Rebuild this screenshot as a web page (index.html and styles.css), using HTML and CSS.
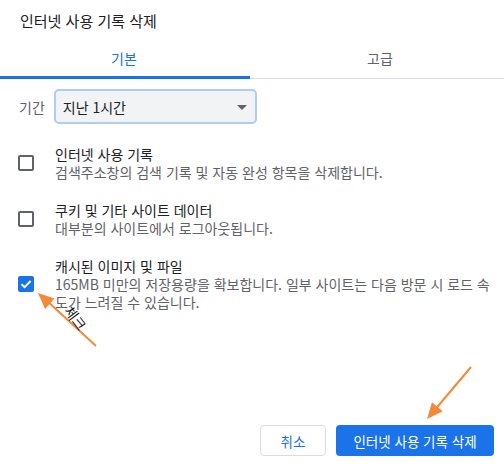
FILE: index.html
```html
<!DOCTYPE html>
<html lang="ko">
<head>
<meta charset="utf-8">
<link rel="stylesheet" href="styles.css">
</head>
<body>
<div class="dialog">
  <div class="title">인터넷 사용 기록 삭제</div>
  <div class="tabs">
    <div class="tab active">기본</div>
    <div class="tab">고급</div>
  </div>
  <div class="period">
    <span class="period-label">기간</span>
    <div class="select">
      <span>지난 1시간</span>
      <span class="caret"></span>
    </div>
  </div>
  <div class="items">
    <div class="item">
      <span class="box"></span>
      <div class="item-text">
        <div class="item-title">인터넷 사용 기록</div>
        <div class="item-desc">검색주소창의 검색 기록 및 자동 완성 항목을 삭제합니다.</div>
      </div>
    </div>
    <div class="item">
      <span class="box"></span>
      <div class="item-text">
        <div class="item-title">쿠키 및 기타 사이트 데이터</div>
        <div class="item-desc">대부분의 사이트에서 로그아웃됩니다.</div>
      </div>
    </div>
    <div class="item">
      <span class="box checked">
        <svg viewBox="0 0 16 16" width="16" height="16"><path d="M3.5 8.2 L6.6 11.2 L12.6 5" fill="none" stroke="#fff" stroke-width="2"/></svg>
      </span>
      <div class="item-text">
        <div class="item-title">캐시된 이미지 및 파일</div>
        <div class="item-desc">165MB 미만의 저장용량을 확보합니다. 일부 사이트는 다음 방문 시 로드 속도가 느려질 수 있습니다.</div>
      </div>
    </div>
  </div>
  <div class="footer">
    <button class="btn cancel">취소</button>
    <button class="btn primary">인터넷 사용 기록 삭제</button>
  </div>

  <svg class="annot" width="504" height="464" viewBox="0 0 504 464">
    <line x1="96" y1="346" x2="46" y2="300" stroke="#f5893a" stroke-width="2"/>
    <polygon points="38,293 45.1,309 54.5,298.6" fill="#f5893a"/>
    <line x1="471" y1="367" x2="433" y2="412" stroke="#f5893a" stroke-width="2"/>
    <polygon points="427,419 442.7,411.3 432,402.3" fill="#f5893a"/>
  </svg>
  <span class="note">체크</span>
</div>
</body>
</html>
```

FILE: styles.css
```css
* { box-sizing: border-box; }
html, body { margin: 0; padding: 0; background: #fff; }
body {
  font-family: "Noto Sans CJK KR", "Noto Sans", sans-serif;
  color: #202124;
}
.dialog {
  position: relative;
  width: 504px;
  height: 464px;
  display: flex;
  flex-direction: column;
}
.title {
  height: 38px;
  padding: 11px 0 0 20px;
  font-size: 15px;
  line-height: 20px;
  color: #202124;
}
.tabs {
  display: flex;
  height: 41px;
  border-bottom: 1px solid #dadce0;
}
.tab {
  position: relative;
  flex: 1;
  text-align: center;
  font-size: 14px;
  line-height: 40px;
  color: #5f6368;
}
.tab.active { color: #1a73e8; }
.tab + .tab { padding-left: 8px; }
.tab.active::after {
  content: "";
  position: absolute;
  left: 0;
  right: -2px;
  bottom: -1px;
  height: 3px;
  background: #1a73e8;
}
.period {
  display: flex;
  align-items: center;
  gap: 9px;
  margin-top: 10px;
  padding-left: 19px;
}
.period-label {
  font-size: 14px;
  color: #5f6368;
}
.select {
  width: 203px;
  height: 35px;
  display: flex;
  align-items: center;
  justify-content: space-between;
  padding: 0 8px 0 7px;
  background: #f1f3f4;
  border: 2px solid #b0cbf5;
  border-radius: 5px;
  font-size: 14px;
  color: #202124;
}
.caret {
  width: 0;
  height: 0;
  border-left: 5px solid transparent;
  border-right: 5px solid transparent;
  border-top: 5px solid #5f6368;
  margin-top: 2px;
}
.items {
  display: flex;
  flex-direction: column;
  gap: 20px;
  margin-top: 21px;
}
.item {
  display: flex;
  align-items: center;
  padding-left: 18px;
}
.box {
  flex: none;
  width: 16px;
  height: 16px;
  border: 2px solid #5f6368;
  border-radius: 2px;
  margin-right: 21px;
}
.box.checked {
  border: none;
  background: #1a73e8;
}
.box svg { display: block; }
.item-text {
  width: 440px;
  font-size: 14px;
  line-height: 18px;
}
.item-title { color: #202124; }
.item-desc {
  color: #5f6368;
  word-break: break-all;
}
.footer {
  margin-top: auto;
  display: flex;
  justify-content: flex-end;
  gap: 10px;
  padding: 0 10px 8px 0;
}
.btn {
  height: 31px;
  border-radius: 4px;
  font-family: "Noto Sans CJK KR", "Noto Sans", sans-serif;
  font-size: 13.5px;
  padding: 0;
}
.cancel {
  width: 66px;
  background: #fff;
  border: 1px solid #dadce0;
  color: #1a73e8;
}
.primary {
  width: 158px;
  background: #1a73e8;
  border: none;
  color: #fff;
}
.annot {
  position: absolute;
  left: 0;
  top: 0;
  pointer-events: none;
}
.note {
  position: absolute;
  left: 63px;
  top: 309px;
  font-size: 14px;
  line-height: 18px;
  color: #111;
  transform: rotate(53deg);
  transform-origin: center;
}
```
